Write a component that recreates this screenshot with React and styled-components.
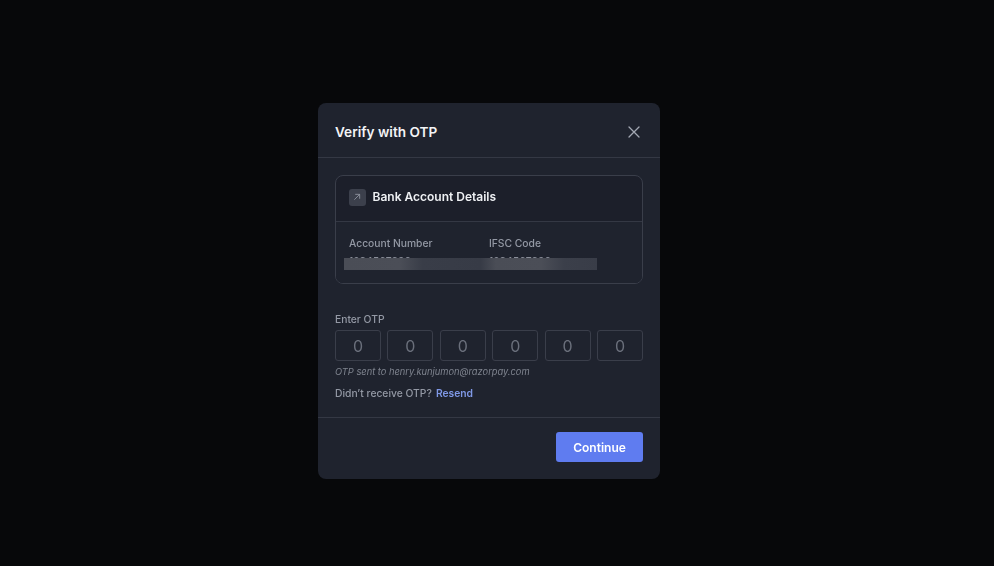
import React from "react";
import styled, { createGlobalStyle } from "styled-components";

const Global = createGlobalStyle`
  html, body { margin: 0; padding: 0; height: 100%; background: #07080a; }
  body { font-family: Inter, "Liberation Sans", sans-serif; -webkit-font-smoothing: antialiased; }
  * { box-sizing: border-box; }
`;

const Page = styled.div`
  width: 994px;
  height: 566px;
  padding: 103px 0 0 318px;
  background: #07080a;
  overflow: hidden;
`;
const Modal = styled.section`
  width: 342px;
  height: 376px;
  background: #1f232e;
  border-radius: 8px;
  display: flex;
  flex-direction: column;
  filter: blur(0.3px);
`;
const Header = styled.header`
  height: 55px;
  flex: none;
  padding: 3px 19px 0 17px;
  display: flex;
  align-items: center;
  justify-content: space-between;
  border-bottom: 1px solid #343844;
`;
const Title = styled.h2`
  margin: 0;
  font-size: 13.6px;
  line-height: 20px;
  font-weight: 600;
  color: #f3f4f6;
`;
const Close = styled.button`
  width: 14px;
  height: 14px;
  padding: 0;
  border: 0;
  background: none;
  color: #a3a8b3;
  display: flex;
`;
const Body = styled.div`
  flex: 1;
  padding: 17px 17px 0;
`;
const Card = styled.div`
  height: 109px;
  position: relative;
  background: #1c1f2a;
  border: 1px solid #3a3e4a;
  border-radius: 8px;
  overflow: hidden;
`;
const CardHead = styled.div`
  height: 46px;
  padding: 0 12px 3px;
  display: flex;
  align-items: center;
  gap: 7px;
  border-bottom: 1px solid #343844;
`;
const IconBox = styled.span`
  width: 17px;
  height: 17px;
  margin-left: 0.5px;
  border-radius: 3px;
  background: #3c404c;
  color: #9a9eaa;
  display: flex;
  align-items: center;
  justify-content: center;
`;
const CardTitle = styled.h3`
  margin: 0;
  font-size: 12px;
  line-height: 16px;
  font-weight: 600;
  color: #eef0f3;
`;
const Fields = styled.div`
  padding: 15px 12px 0 13px;
  display: grid;
  grid-template-columns: 140px 1fr;
  background: #1f232e;
  height: 61px;
`;
const Field = styled.div`
  display: flex;
  flex-direction: column;
`;
const FieldLabel = styled.span`
  font-size: 10.3px;
  line-height: 13px;
  font-weight: 500;
  color: #9499a5;
`;
const FieldValue = styled.span`
  font-size: 10.3px;
  line-height: 13px;
  margin-top: 5px;
  font-weight: 500;
  color: #8b8f9a;
`;
const Masked = styled.div`
  position: absolute;
  left: 8px;
  top: 82px;
  width: 253px;
  height: 12px;
  background: linear-gradient(90deg, #4a4d56 0, #4b4e57 22%, #393d48 31%, #373b46 54%, #4a4d56 60%, #4b4e57 78%, #3b3f4a 87%, #393d48 100%);
`;
const OtpLabel = styled.label`
  display: block;
  margin-top: 29px;
  font-size: 10.3px;
  line-height: 13px;
  font-weight: 500;
  color: #9499a5;
`;
const OtpRow = styled.div`
  margin-top: 4px;
  display: flex;
  justify-content: space-between;
`;
const OtpCell = styled.div`
  width: 46px;
  height: 31px;
  border: 1px solid #3a3e4a;
  border-radius: 3px;
  display: flex;
  align-items: center;
  justify-content: center;
  font-size: 16px;
  color: #6a6f7b;
`;
const Hint = styled.p`
  margin: 4px 0 0;
  font-size: 9.3px;
  line-height: 13px;
  font-style: italic;
  color: #7f848f;
`;
const Resend = styled.p`
  margin: 8px 0 0;
  font-size: 10.3px;
  line-height: 14px;
  font-weight: 500;
  color: #9499a5;
  display: flex;
  gap: 4px;
`;
const ResendLink = styled.a`
  color: #7f98e6;
  font-weight: 600;
`;
const Footer = styled.footer`
  height: 62px;
  flex: none;
  padding: 14px 17px 0;
  display: flex;
  justify-content: flex-end;
  align-items: flex-start;
  border-top: 1px solid #343844;
`;
const Primary = styled.button`
  width: 87px;
  height: 30px;
  border: 0;
  border-radius: 3px;
  background: #5f7cf0;
  color: #fff;
  font: 600 12px Inter, "Liberation Sans", sans-serif;
`;

export default function App() {
  return (
    <Page>
      <Global />
      <Modal>
        <Header>
          <Title>Verify with OTP</Title>
          <Close aria-label="Close">
            <svg width="14" height="14" viewBox="0 0 14 14" fill="none" stroke="currentColor" strokeWidth="1.3" strokeLinecap="round">
              <path d="M2 2 L12 12 M12 2 L2 12" />
            </svg>
          </Close>
        </Header>
        <Body>
          <Card>
            <CardHead>
              <IconBox>
                <svg width="8" height="8" viewBox="0 0 9 9" fill="none" stroke="currentColor" strokeWidth="0.9">
                  <path d="M1.5 7.5 L7.5 1.5 M2.5 1.5 H7.5 V6.5" />
                </svg>
              </IconBox>
              <CardTitle>Bank Account Details</CardTitle>
            </CardHead>
            <Fields>
              <Field>
                <FieldLabel>Account Number</FieldLabel>
                <FieldValue>1234567890</FieldValue>
              </Field>
              <Field>
                <FieldLabel>IFSC Code</FieldLabel>
                <FieldValue>1234567890</FieldValue>
              </Field>
            </Fields>
            <Masked />
          </Card>
          <OtpLabel>Enter OTP</OtpLabel>
          <OtpRow>
            {[0, 1, 2, 3, 4, 5].map((i) => (
              <OtpCell key={i}>0</OtpCell>
            ))}
          </OtpRow>
          <Hint>OTP sent to henry.kunjumon@razorpay.com</Hint>
          <Resend>
            Didn’t receive OTP?
            <ResendLink>Resend</ResendLink>
          </Resend>
        </Body>
        <Footer>
          <Primary>Continue</Primary>
        </Footer>
      </Modal>
    </Page>
  );
}
